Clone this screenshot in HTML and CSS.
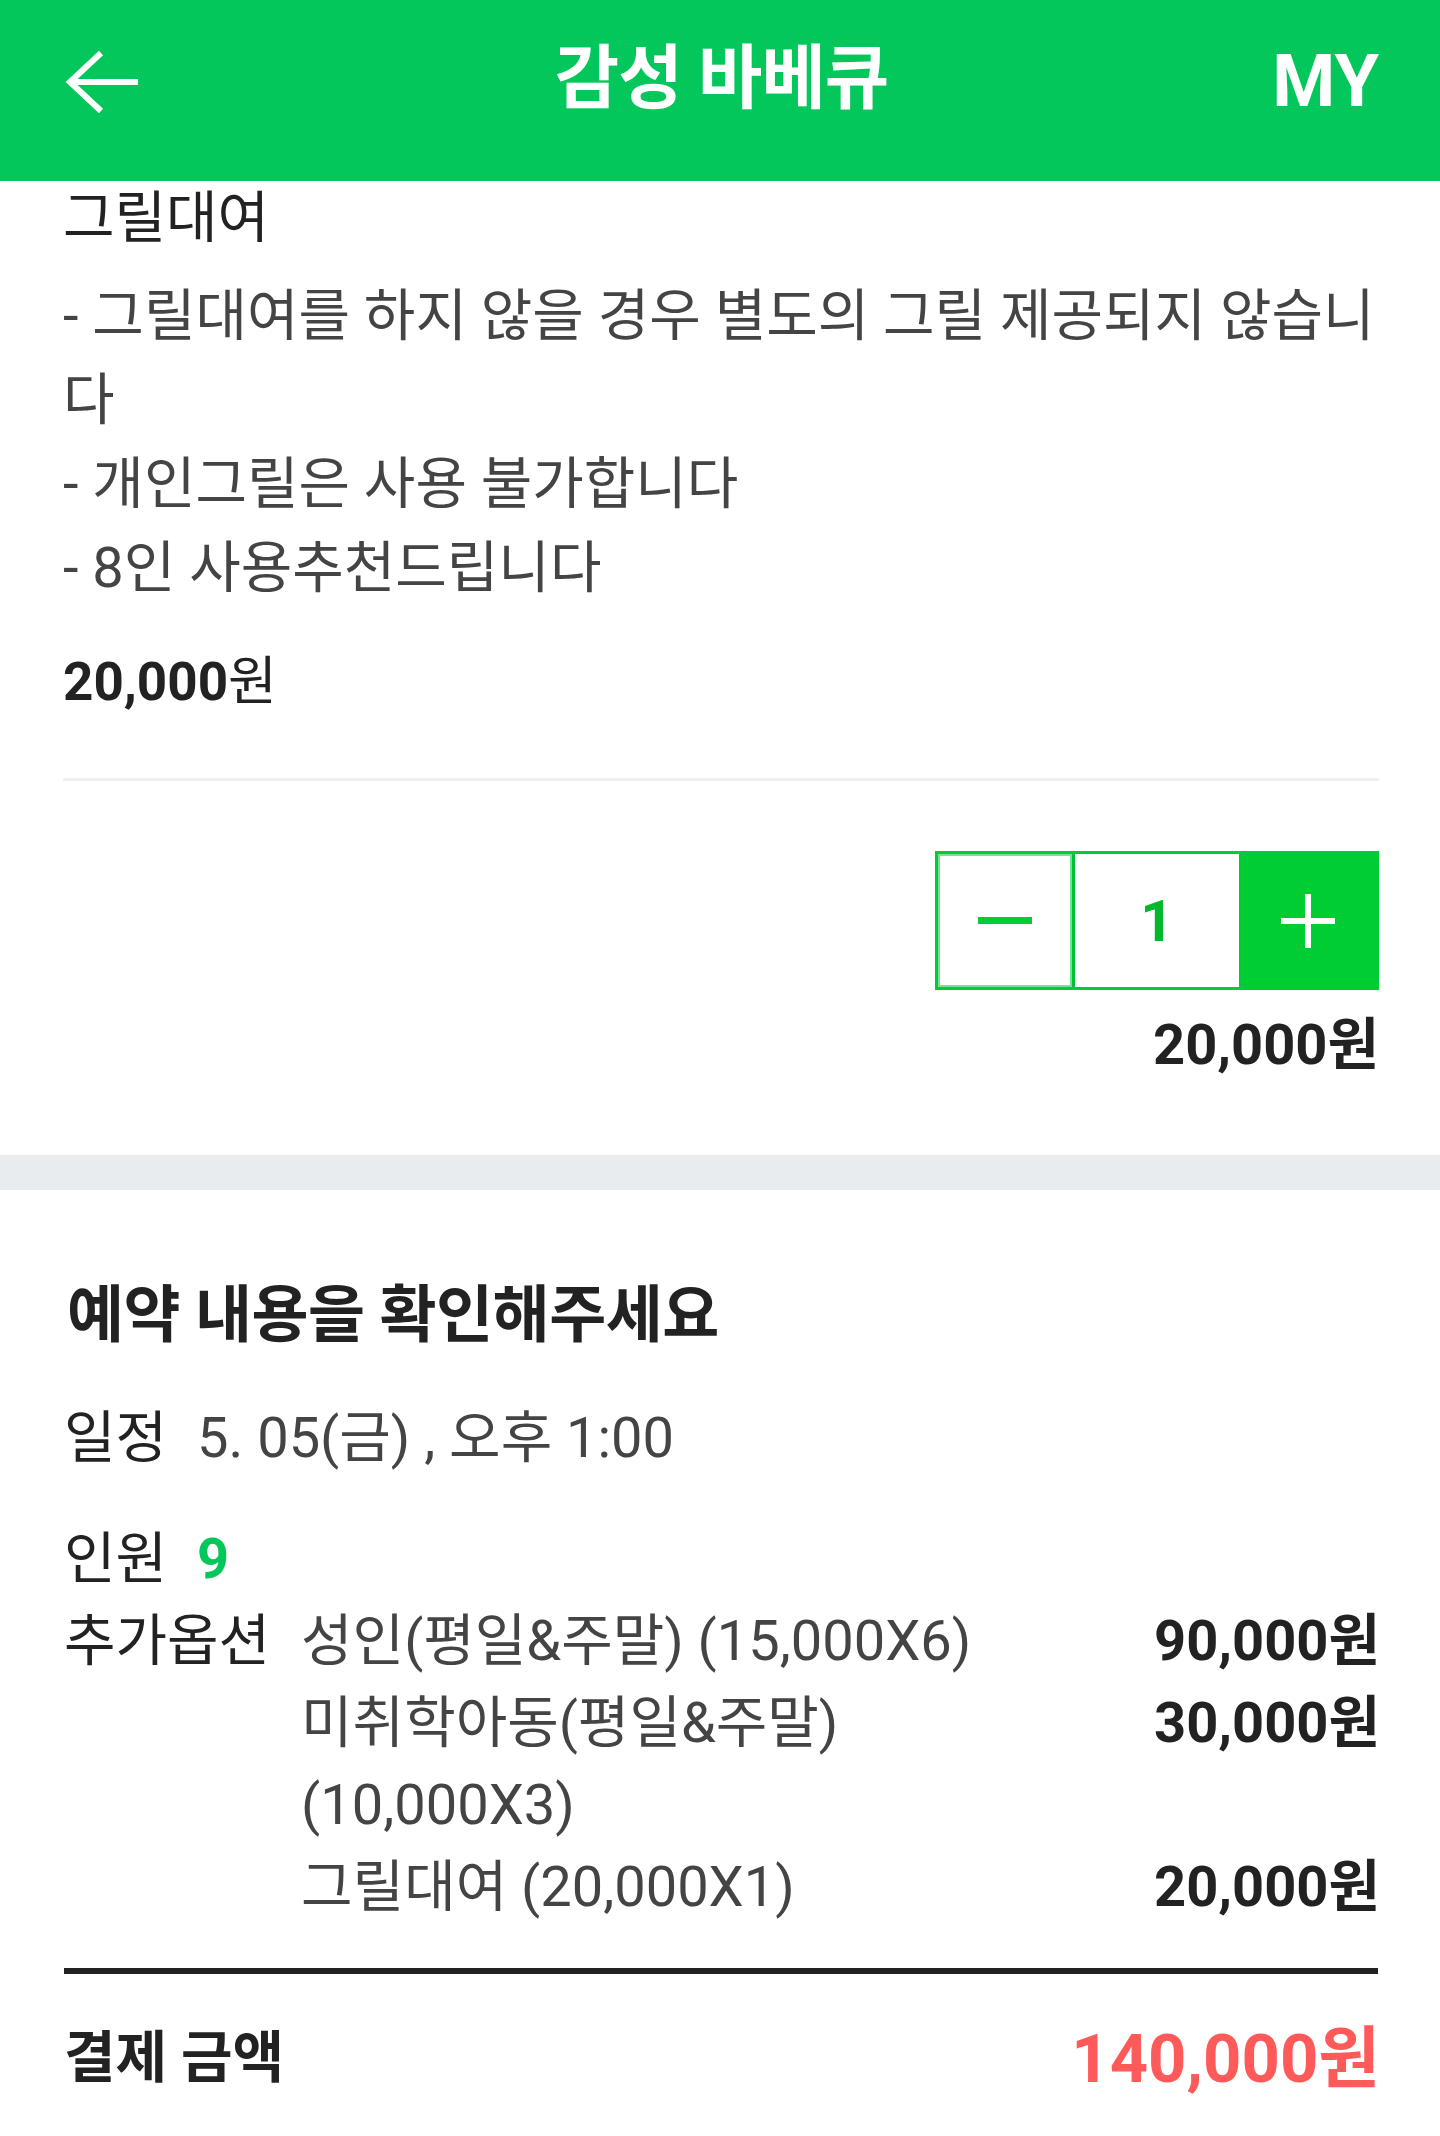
FILE: index.html
```html
<!DOCTYPE html>
<html lang="ko">
<head>
<meta charset="utf-8">
<title>감성 바베큐</title>
<link rel="stylesheet" href="styles.css">
</head>
<body>
<header class="topbar">
  <a class="back" aria-label="뒤로">
    <svg width="76" height="64" viewBox="0 0 76 64"><path d="M37 3 L6 32 L37 61 M6 32 L74 32" fill="none" stroke="#fff" stroke-width="6"/></svg>
  </a>
  <h1 class="title">감성 바베큐</h1>
  <span class="my">MY</span>
</header>

<section class="product">
  <h2 class="opt-name">그릴대여</h2>
  <p class="desc">- 그릴대여를 하지 않을 경우 별도의 그릴 제공되지 않습니다<br>- 개인그릴은 사용 불가합니다<br>- 8인 사용추천드립니다</p>
  <p class="unit-price"><b>20,000</b>원</p>
  <hr class="divider">
  <div class="qty-wrap">
    <div class="stepper">
      <button class="step minus" aria-label="감소"><span class="dash"></span></button>
      <div class="num">1</div>
      <button class="step plus" aria-label="증가"><span class="cross"></span></button>
    </div>
  </div>
  <p class="sum">20,000원</p>
</section>

<div class="band"></div>

<section class="summary">
  <h2 class="sum-title">예약 내용을 확인해주세요</h2>
  <div class="row date"><span class="label">일정</span><span class="value">5. 05(금) , 오후 1:00</span></div>
  <div class="row people"><span class="label">인원</span><span class="count">9</span></div>
  <div class="row options">
    <span class="label label-wide">추가옵션</span>
    <ul class="opt-list">
      <li><span class="oname">성인(평일&amp;주말) (15,000X6)</span><span class="oprice">90,000원</span></li>
      <li><span class="oname">미취학아동(평일&amp;주말) (10,000X3)</span><span class="oprice">30,000원</span></li>
      <li><span class="oname">그릴대여 (20,000X1)</span><span class="oprice">20,000원</span></li>
    </ul>
  </div>
  <div class="rule"></div>
  <div class="total"><span class="total-label">결제 금액</span><span class="total-price">140,000원</span></div>
</section>
</body>
</html>
```

FILE: styles.css
```css
* { box-sizing: border-box; }
html, body { margin: 0; padding: 0; background: #fff; }
body {
  font-family: Roboto, "Noto Sans CJK KR", sans-serif;
  color: #222;
  width: 1440px;
  height: 2136px;
  overflow: hidden;
}
.topbar {
  height: 181px;
  background: #03c75a;
  display: grid;
  grid-template-columns: 1fr auto 1fr;
  align-items: center;
  padding: 0 61px 18px 64px;
  color: #fff;
}
.back { display: flex; align-items: center; }
.back svg { display: block; }
.title {
  margin: 0;
  font-size: 70px;
  font-weight: 700;
  letter-spacing: -1px;
  line-height: 1;
  margin-top: -6px;
}
.my {
  justify-self: end;
  font-family: Roboto, sans-serif;
  font-weight: 700;
  font-size: 72px;
  line-height: 1;
}
.product { padding: 0 61px 75px 63px; }
.opt-name {
  margin: 0;
  font-size: 56px;
  font-weight: 400;
  line-height: 74px;
  color: #222;
}
.desc {
  margin: 19px 0 0;
  font-size: 56px;
  line-height: 84px;
  color: #444;
}
.unit-price {
  margin: 30px 0 0;
  font-size: 53px;
  line-height: 84px;
  color: #222;
}
.unit-price b { font-weight: 700; }
.divider {
  margin: 54px 0 0;
  border: 0;
  height: 3px;
  background: #f0f0f0;
}
.qty-wrap { display: flex; justify-content: flex-end; margin-top: 70px; }
.stepper {
  display: flex;
  height: 139px;
  border: 3px solid #00cc33;
}
.step {
  border: 0;
  padding: 0;
  margin: 0;
  display: flex;
  align-items: center;
  justify-content: center;
  cursor: pointer;
}
.minus {
  width: 137px;
  background: #fff;
  box-shadow: inset 0 0 0 2px #6ee596;
  border-right: 3px solid #00c12e;
}
.dash { width: 54px; height: 7px; background: #00cc33; display: block; }
.num {
  width: 164px;
  display: flex;
  align-items: center;
  justify-content: center;
  color: #00b82b;
  font-weight: 700;
  font-size: 58px;
  font-family: Roboto, sans-serif;
}
.plus { width: 137px; background: #00cc33; }
.cross { position: relative; width: 54px; height: 54px; display: block; }
.cross::before, .cross::after {
  content: "";
  position: absolute;
  background: #fff;
}
.cross::before { left: 0; right: 0; top: 24px; height: 6px; }
.cross::after { top: 0; bottom: 0; left: 24px; width: 6px; }
.sum {
  margin: 20px 0 0;
  text-align: right;
  font-size: 56px;
  font-weight: 700;
  line-height: 70px;
}
.band { height: 35px; background: #e8ecef; }
.summary { padding: 86px 60px 0 64px; }
.sum-title {
  margin: 0 0 0 3px;
  font-size: 62px;
  font-weight: 700;
  line-height: 80px;
  color: #222;
  letter-spacing: -0.5px;
}
.row {
  display: flex;
  font-size: 56px;
  line-height: 82px;
}
.date { margin-top: 41px; }
.people { margin-top: 39px; }
.label { color: #222; margin-right: 30px; flex: none; }
.label-wide { margin-right: 31px; }
.value { color: #444; }
.count { color: #03c75a; font-weight: 700; }
.opt-list { list-style: none; margin: 0; padding: 0; flex: 1; }
.opt-list li { display: flex; justify-content: space-between; align-items: flex-start; }
.oname { color: #444; width: 780px; }
.oprice { color: #222; font-weight: 700; font-size: 56px; text-align: right; }
.rule { height: 6px; background: #222; margin-top: 40px; margin-right: 2px; }
.total {
  display: flex;
  justify-content: space-between;
  align-items: center;
  height: 100px;
  margin-top: 28px;
}
.total-label { font-size: 56px; font-weight: 700; color: #222; }
.total-price { font-size: 67px; font-weight: 700; color: #ff5a5a; }
```
